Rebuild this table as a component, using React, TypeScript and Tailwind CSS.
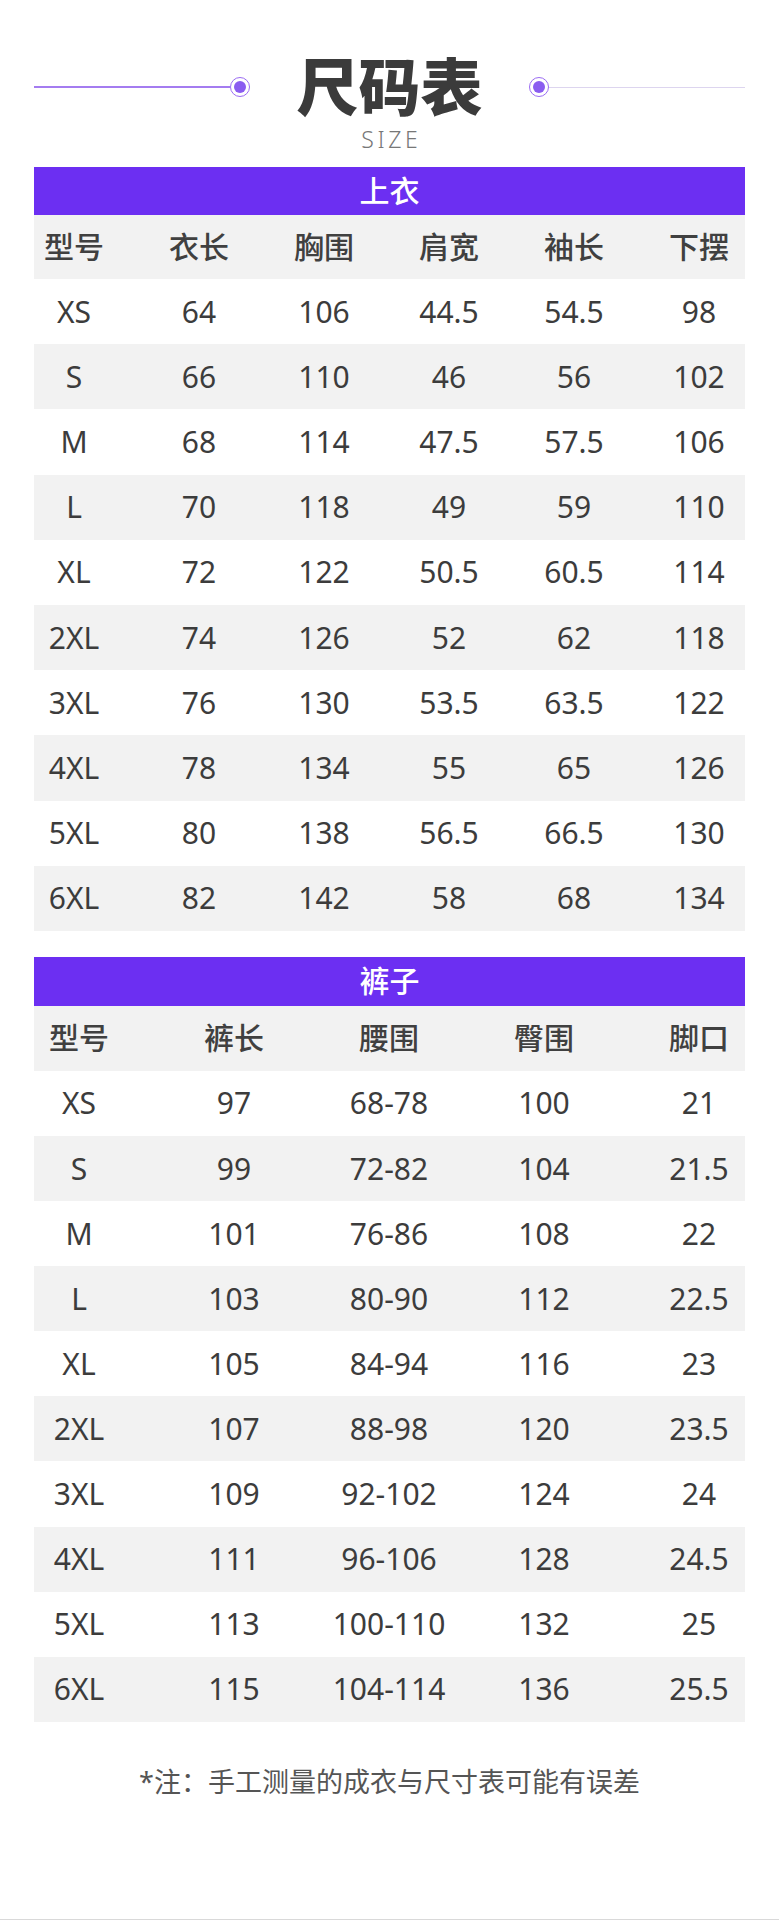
import React from "react";

const FONT = { fontFamily: '"Noto Sans", "Noto Sans CJK SC", sans-serif' };

const topHead = ["型号", "衣长", "胸围", "肩宽", "袖长", "下摆"];
const topRows = [
  ["XS", "64", "106", "44.5", "54.5", "98"],
  ["S", "66", "110", "46", "56", "102"],
  ["M", "68", "114", "47.5", "57.5", "106"],
  ["L", "70", "118", "49", "59", "110"],
  ["XL", "72", "122", "50.5", "60.5", "114"],
  ["2XL", "74", "126", "52", "62", "118"],
  ["3XL", "76", "130", "53.5", "63.5", "122"],
  ["4XL", "78", "134", "55", "65", "126"],
  ["5XL", "80", "138", "56.5", "66.5", "130"],
  ["6XL", "82", "142", "58", "68", "134"],
];

const pantsHead = ["型号", "裤长", "腰围", "臀围", "脚口"];
const pantsRows = [
  ["XS", "97", "68-78", "100", "21"],
  ["S", "99", "72-82", "104", "21.5"],
  ["M", "101", "76-86", "108", "22"],
  ["L", "103", "80-90", "112", "22.5"],
  ["XL", "105", "84-94", "116", "23"],
  ["2XL", "107", "88-98", "120", "23.5"],
  ["3XL", "109", "92-102", "124", "24"],
  ["4XL", "111", "96-106", "128", "24.5"],
  ["5XL", "113", "100-110", "132", "25"],
  ["6XL", "115", "104-114", "136", "25.5"],
];

function Dot() {
  return (
    <div className="w-[20px] h-[20px] shrink-0 rounded-full border border-[#9b6cf3] flex items-center justify-center bg-white">
      <div className="w-[12px] h-[12px] rounded-full bg-[#8a5cf0]" />
    </div>
  );
}

function Cells({ cells, six, bold }: { cells: string[]; six: boolean; bold?: boolean }) {
  return (
    <div className={six ? "flex h-full items-center gap-[45px]" : "flex h-full items-center gap-[75px] pl-[5px]"}>
      {cells.map((c, i) => (
        <div
          key={i}
          className={`w-[80px] shrink-0 flex justify-center whitespace-nowrap text-[30px] leading-none ${bold ? "font-medium text-[#404040]" : "text-[#3c3c3c]"}`}
        >
          {c}
        </div>
      ))}
    </div>
  );
}

function Table({ title, head, rows, six, barH, headH, rowH }: { title: string; head: string[]; rows: string[][]; six: boolean; barH: string; headH: string; rowH: string }) {
  return (
    <div className="flex flex-col">
      <div className={`${barH} bg-[#6c2ff2] flex items-center justify-center text-white text-[30px] leading-none font-medium`}>{title}</div>
      <div className={`${headH} bg-[#f2f2f2]`}>
        <Cells cells={head} six={six} bold />
      </div>
      {rows.map((r, i) => (
        <div key={i} className={`${rowH} ${i % 2 === 1 ? "bg-[#f2f2f2]" : "bg-white"}`}>
          <Cells cells={r} six={six} />
        </div>
      ))}
    </div>
  );
}

export default function App() {
  return (
    <div className="w-[779px] h-[1920px] bg-white flex flex-col" style={FONT}>
      <div className="px-[34px] flex flex-col">
        <div className="mt-[56px] h-[62px] flex items-center">
          <div className="flex-1 h-[1.5px] bg-[#a47cf0]" />
          <Dot />
          <div className="w-[279px] text-center text-[62px] leading-none font-black text-[#3b3b3b]">尺码表</div>
          <Dot />
          <div className="flex-1 h-px bg-[#ddd5ef]" />
        </div>
        <div className="mt-[10px] text-center text-[23px] leading-none font-light tracking-[0.16em] pl-[0.16em] text-[#777777]">SIZE</div>
        <div className="mt-[16px]">
          <Table title="上衣" head={topHead} rows={topRows} six={true} barH="h-[48px]" headH="h-[64px]" rowH="h-[65.2px]" />
        </div>
        <div className="mt-[26px]">
          <Table title="裤子" head={pantsHead} rows={pantsRows} six={false} barH="h-[49px]" headH="h-[65px]" rowH="h-[65.1px]" />
        </div>
        <div className="mt-[46px] text-center text-[27px] leading-none text-[#555555]">*注：手工测量的成衣与尺寸表可能有误差</div>
      </div>
      <div className="mt-auto h-px bg-[#d9d9d9]" />
    </div>
  );
}
